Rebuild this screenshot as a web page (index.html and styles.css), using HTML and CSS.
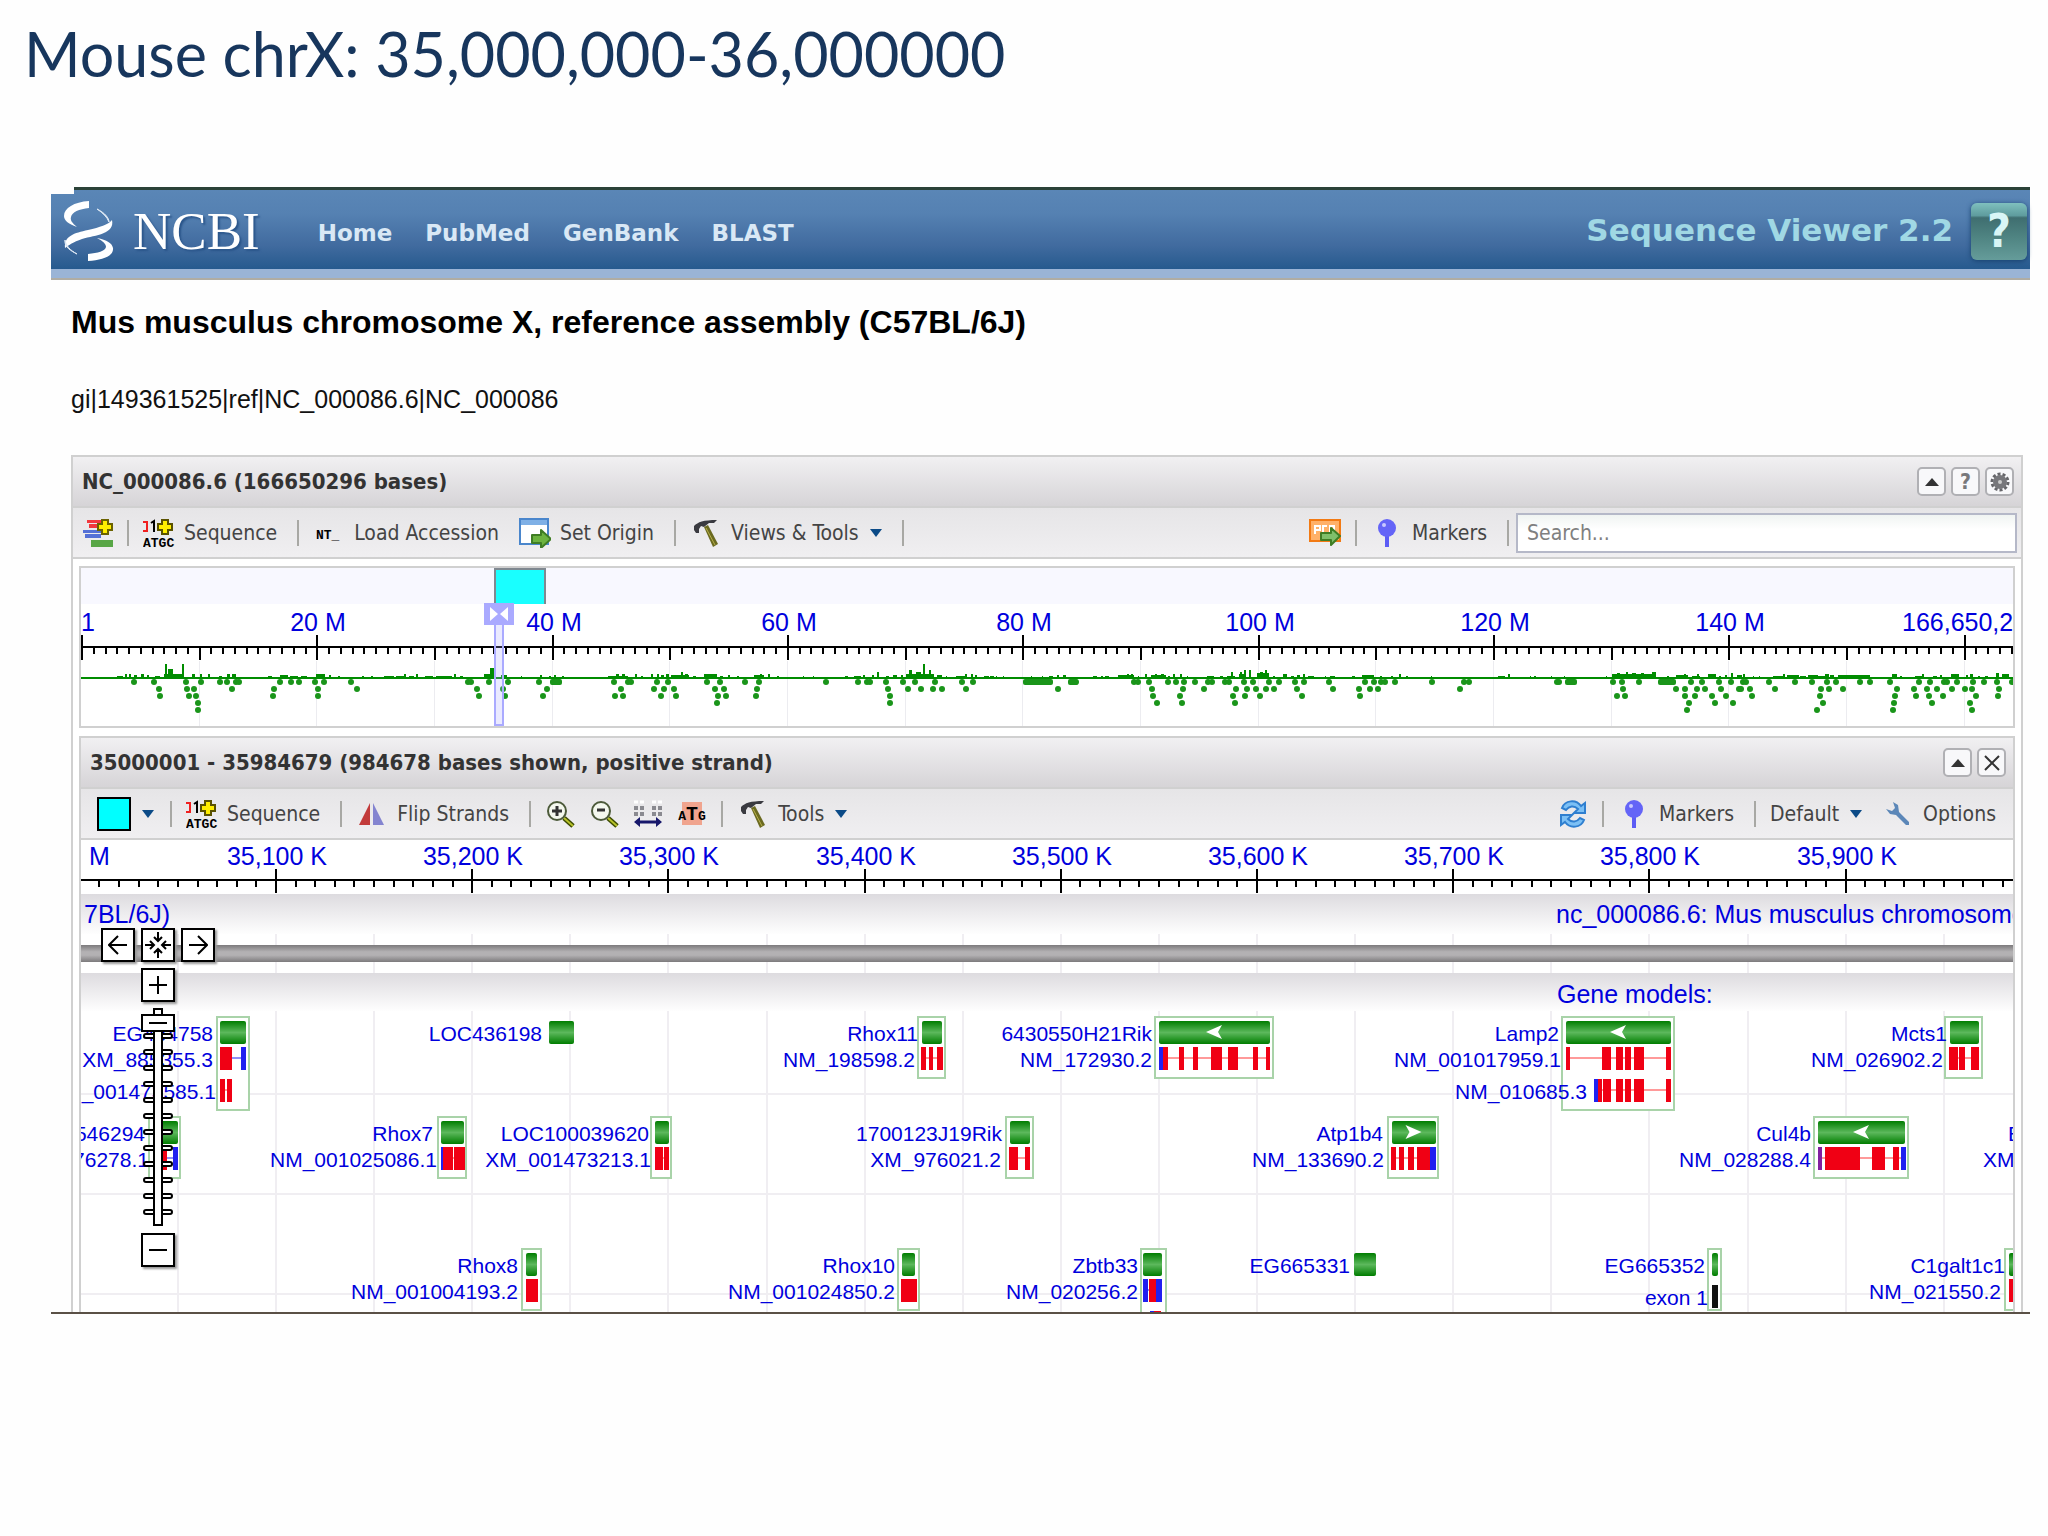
FILE: index.html
```html
<!DOCTYPE html>
<html lang="en">
<head>
  <meta charset="UTF-8">
  <title>Mouse chrX: 35,000,000-36,000000</title>
  <link rel="stylesheet" href="styles.css">
</head>
<body>

  <!-- icon definitions -->
  <svg class="defs" width="0" height="0" aria-hidden="true">
    <symbol id="i-caret" viewBox="0 0 12 8"><path d="M0 0h12L6 8z" fill="#0b4a87"/></symbol>
    <symbol id="i-tracks" viewBox="0 0 30 28">
      <path d="M4 1h14v3H4zM6 5h14v4H6z" fill="#f2383e"/>
      <path d="M0 11h19v3H0zM2 15h16v4H2z" fill="#5470d6"/>
      <path d="M8 21h22v7H8z" fill="#58a646"/>
      <path d="M19 1h6v4h4v6h-4v4h-6v-4h-4V5h4z" fill="#ffee00" stroke="#6b6200" stroke-width="2"/>
    </symbol>
    <symbol id="i-origin" viewBox="0 0 32 30">
      <rect x="1" y="1" width="28" height="25" fill="#fff" stroke="#4a86cc" stroke-width="2"/>
      <rect x="2" y="2" width="26" height="5" fill="#7fb0e6"/>
      <path d="M13 17h9v-5l10 9-10 9v-5h-9z" fill="#6cb33f" stroke="#3f7d24" stroke-width="2" stroke-linejoin="round"/>
    </symbol>
    <symbol id="i-hammer" viewBox="0 0 32 30">
      <path d="M4 8c4-4 9-6 23-6l-3 3h-5l-5 4-3-1-2 3v4H6l-2-3z" fill="#3a3a40"/>
      <path d="M14 9l4-2 10 19-5 3z" fill="#6b6a20"/>
      <path d="M16 10l9 17" stroke="#b8b04a" stroke-width="1"/>
    </symbol>
    <symbol id="i-export" viewBox="0 0 32 28">
      <rect x="1" y="1" width="30" height="21" fill="#ffb169" stroke="#f27a14" stroke-width="2"/>
      <path d="M6 15V7h5v4H7M14 15V7h4M21 15V7h4v4" fill="none" stroke="#fff" stroke-width="2"/>
      <path d="M12 14h10V9l9 8-9 9v-5H12z" fill="#7fbf6a" stroke="#3f7d24" stroke-width="2" stroke-linejoin="round"/>
    </symbol>
    <symbol id="i-pin" viewBox="0 0 32 30">
      <path d="M14 16h4v13h-4z" fill="#5c5cf5"/>
      <circle cx="16" cy="10" r="9" fill="#6464f7"/>
      <circle cx="13" cy="7" r="2" fill="#c8c8ff"/>
    </symbol>
    <symbol id="i-flip" viewBox="0 0 32 28">
      <path d="M14 3v22H3z" fill="#c23b3b"/>
      <path d="M17 3v22h11z" fill="#8484d0"/>
    </symbol>
    <symbol id="i-zoom-in" viewBox="0 0 30 28">
      <path d="M19 18l9 8" stroke="#3c4a00" stroke-width="5"/>
      <path d="M19 18l9 8" stroke="#b7c22a" stroke-width="2"/>
      <circle cx="12" cy="11" r="9" fill="#f4f8ee" stroke="#4c5a3a" stroke-width="2"/>
      <path d="M7 11h10M12 6v10" stroke="#333" stroke-width="3"/>
    </symbol>
    <symbol id="i-zoom-out" viewBox="0 0 30 28">
      <path d="M19 18l9 8" stroke="#3c4a00" stroke-width="5"/>
      <path d="M19 18l9 8" stroke="#b7c22a" stroke-width="2"/>
      <circle cx="12" cy="11" r="9" fill="#f4f8ee" stroke="#4c5a3a" stroke-width="2"/>
      <path d="M8 10h8" stroke="#333" stroke-width="3"/>
    </symbol>
    <symbol id="i-range" viewBox="0 0 30 28">
      <path d="M1 2h4M7 2h4M19 2h4M25 2h4" stroke="#fff" stroke-width="3"/>
      <path d="M1 8h4M7 8h4M19 8h4M25 8h4M1 14h4M7 14h4M19 14h4M25 14h4" stroke="#8a8a90" stroke-width="4"/>
      <path d="M4 22h22" stroke="#17176b" stroke-width="3"/>
      <path d="M7 17v10l-6-5zM23 17v10l6-5z" fill="#17176b"/>
    </symbol>
    <symbol id="i-refresh" viewBox="0 0 30 28">
      <path d="M4 8C7 0 18-1 23 6l4-3v10H16l4-4c-4-4-9-3-12 1z" fill="#7cc0f5" stroke="#2f7fd0" stroke-width="2"/>
      <path d="M26 20C23 28 12 29 7 22l-4 3V15h11l-4 4c4 4 9 3 12-1z" fill="#7cc0f5" stroke="#2f7fd0" stroke-width="2"/>
    </symbol>
    <symbol id="i-wrench" viewBox="0 0 32 28">
      <path d="M4 9l6 2 3-3-2-6 5 3 1 7 10 10v3h-3L14 15l-6-1z" fill="#5c87b8"/>
    </symbol>
    <symbol id="i-gear" viewBox="0 0 20 20">
      <circle cx="10" cy="10" r="8" fill="none" stroke="#66666a" stroke-width="3" stroke-dasharray="3 2"/>
      <circle cx="10" cy="10" r="7" fill="#77777b"/>
      <circle cx="10" cy="10" r="2" fill="#ccc"/>
    </symbol>
    <linearGradient id="gene-fill" x1="0" y1="0" x2="0" y2="1">
      <stop offset="0" stop-color="#007d00"/>
      <stop offset="0.5" stop-color="#5cb85c"/>
      <stop offset="1" stop-color="#007d00"/>
    </linearGradient>
    <linearGradient id="band-fill" x1="0" y1="0" x2="0" y2="1">
      <stop offset="0" stop-color="#dddbdf"/>
      <stop offset="1" stop-color="#fefefe"/>
    </linearGradient>
    <linearGradient id="seq-fill" x1="0" y1="0" x2="0" y2="1">
      <stop offset="0" stop-color="#7c7a7c"/>
      <stop offset="0.4" stop-color="#b3b1b3"/>
      <stop offset="0.6" stop-color="#b3b1b3"/>
      <stop offset="1" stop-color="#7c7a7c"/>
    </linearGradient>
  </svg>

  <h1 class="slide-title">Mouse chrX: 35,000,000-36,000000</h1>

  <div class="frame">
    <header class="banner">
      <a class="logo" href="#" aria-label="NCBI">
        <svg width="54" height="62" viewBox="0 0 54 62">
          <path d="M27 1C12 2 2 8 2 16c0 4 4 8 13 11-5-4-7-7-6-10 1-5 8-8 18-9z" fill="#fff"/>
          <path d="M35 9c8 4 12 9 12 13-2-5-6-9-12-13z" fill="#dfe9f5" stroke="#dfe9f5"/>
          <path d="M50 20c3 14-16 15-30 19-9 3-13 6-17 9C2 36 12 33 26 30c12-3 20-5 24-10z" fill="#fff"/>
          <path d="M3 40c1 6 5 10 12 14-6-3-13-7-12-14z" fill="#dfe9f5" stroke="#dfe9f5"/>
          <path d="M35 38c10 2 15 5 16 10 1 8-10 12-25 13v-7c10-1 17-3 18-7 0-3-3-6-9-9z" fill="#fff"/>
        </svg>
        <span>NCBI</span>
      </a>
      <nav class="nav">
        <a href="#">Home</a>
        <a href="#">PubMed</a>
        <a href="#">GenBank</a>
        <a href="#">BLAST</a>
      </nav>
      <span class="app-name">Sequence Viewer 2.2</span>
      <button class="help-btn">?</button>
    </header>

    <main class="content">
      <h2 class="seq-title">Mus musculus chromosome X, reference assembly (C57BL/6J)</h2>
      <p class="seq-id">gi|149361525|ref|NC_000086.6|NC_000086</p>

      <section class="panel">
        <div class="panel-header">
          <h3>NC_000086.6 (166650296 bases)</h3>
          <button class="tool" aria-label="Collapse"><svg width="14" height="8"><path d="M7 0l7 8H0z" fill="#333"/></svg></button>
          <button class="tool">?</button>
          <button class="tool" aria-label="Settings"><svg width="20" height="20"><use href="#i-gear"/></svg></button>
        </div>
        <div class="toolbar">
          <button class="tb-btn icon-only" aria-label="Tracks"><svg width="30" height="28"><use href="#i-tracks"/></svg></button>
          <i class="sep"></i>
          <button class="tb-btn">
            <svg width="32" height="28">
              <path d="M0 3h4v9H0" fill="none" stroke="#f02020" stroke-width="2"/>
              <path d="M8 4l3-2v11" fill="none" stroke="#000" stroke-width="2"/>
              <text x="0" y="28" class="icon-text">ATGC</text>
              <path d="M19 1h6v4h4v6h-4v4h-6v-4h-4V5h4z" fill="#ffee00" stroke="#5a5200" stroke-width="2"/>
            </svg>Sequence</button>
          <i class="sep"></i>
          <button class="tb-btn"><svg width="32" height="28"><text x="3" y="20" class="icon-text">NT_</text></svg>Load Accession</button>
          <button class="tb-btn"><svg width="32" height="30"><use href="#i-origin"/></svg>Set Origin</button>
          <i class="sep"></i>
          <button class="tb-btn"><svg width="32" height="30"><use href="#i-hammer"/></svg>Views &amp; Tools<svg class="caret" width="12" height="8"><use href="#i-caret"/></svg></button>
          <i class="sep"></i>
          <span class="fill"></span>
          <button class="tb-btn icon-only" aria-label="Export"><svg width="32" height="28"><use href="#i-export"/></svg></button>
          <i class="sep"></i>
          <button class="tb-btn"><svg width="32" height="30"><use href="#i-pin"/></svg>Markers</button>
          <i class="sep"></i>
          <input class="search" type="text" placeholder="Search..." aria-label="Search">
        </div>

        <div class="view overview">
          <svg id="overview" class="track" height="158"></svg>
        </div>

        <div class="view">
          <div class="panel-header">
            <h3>35000001 - 35984679 (984678 bases shown, positive strand)</h3>
            <button class="tool" aria-label="Collapse"><svg width="14" height="8"><path d="M7 0l7 8H0z" fill="#333"/></svg></button>
            <button class="tool" aria-label="Close"><svg width="18" height="18"><path d="M2 2l14 14M16 2L2 16" stroke="#333" stroke-width="2"/></svg></button>
          </div>
          <div class="toolbar inner">
            <button class="tb-btn color-btn" aria-label="Colour"><span class="swatch"></span><svg class="caret" width="12" height="8"><use href="#i-caret"/></svg></button>
            <i class="sep"></i>
            <button class="tb-btn">
              <svg width="32" height="28">
                <path d="M0 3h4v9H0" fill="none" stroke="#f02020" stroke-width="2"/>
                <path d="M8 4l3-2v11" fill="none" stroke="#000" stroke-width="2"/>
                <text x="0" y="28" class="icon-text">ATGC</text>
                <path d="M19 1h6v4h4v6h-4v4h-6v-4h-4V5h4z" fill="#ffee00" stroke="#5a5200" stroke-width="2"/>
              </svg>Sequence</button>
            <i class="sep"></i>
            <button class="tb-btn"><svg width="32" height="28"><use href="#i-flip"/></svg>Flip Strands</button>
            <i class="sep"></i>
            <button class="tb-btn icon-only" aria-label="Zoom in"><svg width="30" height="28"><use href="#i-zoom-in"/></svg></button>
            <button class="tb-btn icon-only" aria-label="Zoom out"><svg width="30" height="28"><use href="#i-zoom-out"/></svg></button>
            <button class="tb-btn icon-only" aria-label="Zoom to range"><svg width="30" height="28"><use href="#i-range"/></svg></button>
            <button class="tb-btn icon-only" aria-label="Zoom to sequence">
              <svg width="30" height="28">
                <rect x="5" y="2" width="20" height="23" fill="#f0a48e"/>
                <text x="15" y="20" text-anchor="middle" class="icon-text">A<tspan class="big">T</tspan>G</text>
              </svg>
            </button>
            <i class="sep"></i>
            <button class="tb-btn"><svg width="32" height="30"><use href="#i-hammer"/></svg>Tools<svg class="caret" width="12" height="8"><use href="#i-caret"/></svg></button>
            <span class="fill"></span>
            <button class="tb-btn icon-only" aria-label="Reload"><svg width="30" height="28"><use href="#i-refresh"/></svg></button>
            <i class="sep"></i>
            <button class="tb-btn"><svg width="32" height="30"><use href="#i-pin"/></svg>Markers</button>
            <i class="sep"></i>
            <button class="tb-btn">Default<svg class="caret" width="12" height="8"><use href="#i-caret"/></svg></button>
            <button class="tb-btn"><svg width="32" height="28"><use href="#i-wrench"/></svg>Options</button>
          </div>
          <div class="detail">
            <svg id="detail" class="track" height="472"></svg>
            <!-- pan / zoom control floating over the tracks -->
            <div class="navigator">
              <div class="pan">
                <button aria-label="Left"><svg width="20" height="20"><path d="M19 10H1M10 1l-9 9 9 9"/></svg></button>
                <button aria-label="Centre"><svg width="28" height="28"><path d="M14 1v9M10 6l4 4 4-4M14 27v-9M10 22l4-4 4 4M1 14h9M6 10l4 4-4 4M27 14h-9M22 10l-4 4 4 4"/></svg></button>
                <button aria-label="Right"><svg width="20" height="20"><path d="M1 10h18M10 1l9 9-9 9"/></svg></button>
              </div>
              <button aria-label="Zoom in"><svg width="20" height="20"><path d="M1 10h18M10 1v18"/></svg></button>
              <div class="zoom">
                <svg id="zoom-scale" width="34" height="219"></svg>
                <input type="range" min="0" max="12" value="12" aria-label="Zoom level">
              </div>
              <button aria-label="Zoom out"><svg width="20" height="20"><path d="M1 10h18"/></svg></button>
            </div>
          </div>
        </div>
      </section>
    </main>
  </div>

  <script src="script.js"></script>
</body>
</html>
```
FILE: styles.css
```css
body {
  margin: 0;
  background: #fefefe;
  font-family: "DejaVu Sans Condensed", "DejaVu Sans", sans-serif;
}

.defs {
  position: absolute;
}

button {
  font: inherit;
  color: inherit;
  background: none;
  border: none;
  padding: 0;
  cursor: pointer;
}

svg {
  display: block;
  flex: none;
}

.icon-text {
  font: bold 13px "Liberation Mono", monospace;
  fill: #000;
}

.icon-text .big {
  font-size: 20px;
}

.slide-title {
  margin: 0;
  padding: 12px 24px 91px;
  font: 61px/84px Lato, sans-serif;
  color: #17365d;
}

.frame {
  margin: 0 18px 40px 51px;
  border-bottom: 2px solid #5a5046;
}

/* banner */
.banner {
  position: relative;
  display: flex;
  align-items: center;
  height: 79px;
  padding: 0 3px 0 11px;
  border-top: 3px solid #2b4238;
  border-bottom: 9px solid #9ab4d6;
  background: linear-gradient(#5a86b6, #5581b2 30%, #416b9f 70%, #265a8e) padding-box;
  box-shadow: 0 2px 0 #b0ada4;
}

.banner::before {
  content: "";
  position: absolute;
  left: 0;
  top: -3px;
  width: 23px;
  height: 7px;
  background: #fefefe;
}

.logo {
  display: flex;
  align-items: center;
  gap: 17px;
  margin-top: 2px;
  color: #fff;
  font: 53px/60px "Liberation Serif", serif;
  text-decoration: none;
  text-shadow: 2px 2px 2px #2a558a;
}

.nav {
  display: flex;
  gap: 33px;
  flex: 1;
  margin-left: 58px;
  padding-top: 6px;
}

.nav a {
  color: #d9e8f5;
  font: bold 23px/30px "DejaVu Sans", sans-serif;
  text-decoration: none;
}

.app-name {
  margin-right: 18px;
  color: #a0d8e4;
  font: bold 31px/40px "DejaVu Sans", sans-serif;
}

.help-btn {
  width: 56px;
  height: 57px;
  margin-top: 4px;
  border-radius: 6px;
  background: linear-gradient(#7fc0be, #5f9c9e 22%, #3f6e70 26%, #4f8482 60%, #659c9a);
  box-shadow: 0 1px 5px #16406e;
  color: #d8f6f6;
  font: bold 46px/57px "DejaVu Sans Condensed", sans-serif;
}

/* sequence info */
.content {
  padding: 24px 7px 0 20px;
}

.seq-title {
  margin: 0 0 42px;
  font: bold 32px/40px "Liberation Sans", Arial, sans-serif;
  color: #000;
}

.seq-id {
  margin: 0 0 41px;
  font: 25px/30px "Liberation Sans", Arial, sans-serif;
  color: #111;
}

/* panels */
.panel {
  border: 2px solid #d0d0d0;
  border-bottom: none;
  background: #fff;
}

.panel-header {
  display: flex;
  align-items: center;
  gap: 5px;
  height: 49px;
  padding: 0 7px 0 9px;
  border-bottom: 2px solid #d0d0d0;
  background: linear-gradient(#f1f0f2, #d6d4d7);
}

.panel-header h3 {
  flex: 1;
  margin: 0;
  font-size: 22px;
  line-height: 28px;
  color: #333;
}

.tool {
  display: flex;
  align-items: center;
  justify-content: center;
  width: 29px;
  height: 29px;
  border: 2px solid #b0b0b4;
  border-radius: 5px;
  background: #f8f8fa;
  font-size: 21px;
  font-weight: bold;
  color: #77777b;
}

.toolbar {
  display: flex;
  align-items: center;
  gap: 14px;
  height: 49px;
  padding: 0 4px 0 10px;
  border-bottom: 2px solid #d0d0d0;
  background: linear-gradient(#e6e5e7, #f0eff1);
}

.toolbar.inner {
  padding: 0 11px 0 16px;
}

.tb-btn {
  display: flex;
  align-items: center;
  gap: 9px;
  padding-right: 6px;
  font-size: 21px;
  line-height: 28px;
  color: #444;
  white-space: nowrap;
}

.tb-btn.icon-only {
  padding-right: 0;
}

.tb-btn.color-btn {
  padding-right: 2px;
}

.sep {
  width: 2px;
  height: 26px;
  background: #a8a8a4;
}

.caret {
  margin-left: 2px;
}

.fill {
  flex: 1;
}

.swatch {
  width: 30px;
  height: 30px;
  border: 2px solid #000;
  background: #0ff;
}

.search {
  box-sizing: border-box;
  width: 501px;
  height: 40px;
  margin-left: -7px;
  padding: 0 9px;
  border: 2px solid #b5b8c8;
  background: linear-gradient(#f0f4f2, #fff 40%);
  font: inherit;
  font-size: 21px;
}

.search::placeholder {
  color: #808080;
}

.view {
  margin: 0 6px;
  border: 2px solid #d0d0d0;
  border-bottom: none;
  background: #fff;
}

.view.overview {
  margin: 7px 6px 8px;
  border-bottom: 2px solid #d0d0d0;
}

/* tracks */
.track {
  width: 100%;
  overflow: hidden;
}

.track text {
  font-family: "Liberation Sans", Arial, sans-serif;
  font-size: 21px;
  fill: #00d;
}

.track text.scale {
  font-size: 25px;
}

.detail {
  position: relative;
}

.navigator {
  position: absolute;
  left: 20px;
  top: 88px;
  display: flex;
  flex-direction: column;
  align-items: center;
  gap: 6px;
}

.pan {
  display: flex;
  gap: 6px;
}

.navigator button {
  display: flex;
  align-items: center;
  justify-content: center;
  width: 34px;
  height: 34px;
  border: 2px solid #000;
  background: #fff;
  box-shadow: 2px 2px 2px #999;
}

.navigator button path {
  fill: none;
  stroke: #000;
  stroke-width: 2;
}

.zoom {
  position: relative;
  width: 34px;
  height: 219px;
}

.zoom input {
  position: absolute;
  left: 0;
  top: 6px;
  width: 34px;
  height: 212px;
  margin: 0;
  appearance: none;
  background: none;
  writing-mode: vertical-lr;
  direction: rtl;
}

.zoom input::-webkit-slider-thumb {
  appearance: none;
  box-sizing: border-box;
  width: 34px;
  height: 18px;
  border: 2px solid #000;
  background: linear-gradient(#000, #000) center / 18px 2px no-repeat #fff;
}
```
FILE: script.js
```js
var LEFT = 81;      // left edge of the tracks
var NS = 'http://www.w3.org/2000/svg';

function add(parent, tag, attrs, text) {
  var el = document.createElementNS(NS, tag);
  for (var k in attrs) el.setAttribute(k, attrs[k]);
  if (text) el.textContent = text;
  parent.appendChild(el);
  return el;
}

function rect(parent, x, y, w, h, fill) {
  return add(parent, 'rect', { x: x, y: y, width: w, height: h, fill: fill });
}

/* ---------- overview ---------- */

// density bars: x, width, height
var density = [
  [117,6,2],[125,2,4],[129,2,4],[134,3,3],[141,3,4],[147,2,3],[155,5,2],[164,20,4],[165,2,14],[168,5,9],[182,2,14],[192,3,4],
  [200,2,4],[208,2,4],[219,3,2],[227,3,4],[232,4,4],[268,4,2],[280,8,3],[290,8,2],[301,6,2],[316,9,4],[329,2,3],[338,2,2],
  [362,2,2],[371,2,2],[384,10,2],[396,8,2],[404,2,4],[409,5,2],[416,2,4],[425,8,2],[436,16,2],[454,2,4],[460,3,2],[484,12,4],
  [490,4,10],[501,6,3],[521,1,2],[540,2,3],[549,2,2],[554,2,3],[562,2,2],[608,20,2],[616,3,4],[622,3,4],[635,2,4],[641,2,2],
  [651,2,4],[657,2,4],[661,3,3],[666,3,4],[671,18,3],[681,2,6],[685,3,4],[693,3,2],[704,13,4],[720,3,2],[728,2,3],[737,2,2],
  [754,10,3],[760,2,4],[768,2,4],[777,2,2],[803,1,2],[813,1,2],[845,3,2],[854,7,2],[863,2,3],[872,2,3],[877,2,6],[886,3,2],
  [893,4,3],[901,2,3],[906,28,4],[909,3,8],[916,5,6],[923,2,14],[929,2,8],[937,5,3],[946,1,2],[956,9,2],[965,2,4],[971,2,4],
  [975,2,3],[984,5,2],[990,4,2],[996,1,2],[1003,1,2],[1031,1,2],[1042,1,2],[1049,4,2],[1057,2,3],[1063,3,3],[1093,4,2],
  [1101,2,2],[1105,4,2],[1118,16,3],[1127,2,4],[1131,2,4],[1138,1,2],[1145,2,4],[1151,15,3],[1155,2,4],[1161,3,4],[1168,2,2],
  [1173,2,4],[1180,2,4],[1187,1,2],[1207,7,2],[1220,3,2],[1227,8,2],[1231,2,6],[1239,6,4],[1240,2,6],[1244,2,8],[1249,2,8],
  [1257,12,5],[1260,3,6],[1265,2,8],[1273,2,2],[1283,4,4],[1291,3,2],[1297,3,3],[1303,2,4],[1308,6,2],[1325,1,2],[1330,5,2],
  [1352,3,2],[1362,12,3],[1380,2,2],[1391,2,2],[1399,2,4],[1406,2,2],[1431,1,2],[1498,7,2],[1508,2,4],[1530,1,2],[1534,2,2],
  [1551,1,2],[1564,1,2],[1606,1,2],[1612,44,4],[1617,3,5],[1626,2,6],[1632,4,5],[1641,3,5],[1652,4,6],[1667,2,2],[1676,12,3],
  [1684,2,4],[1692,8,2],[1697,2,4],[1708,8,4],[1719,2,2],[1725,2,3],[1731,2,5],[1737,5,3],[1743,2,4],[1753,1,2],[1759,1,2],
  [1773,10,2],[1783,2,4],[1787,12,3],[1800,6,2],[1808,10,3],[1818,10,2],[1825,4,4],[1830,4,3],[1838,22,3],[1860,10,3],
  [1892,5,4],[1900,2,2],[1915,8,2],[1922,2,4],[1933,4,2],[1940,2,3],[1951,8,4],[1966,2,3],[1970,3,4],[1978,2,2],[1985,3,2],
  [1996,3,5],[2002,7,4]
];

// gene dots, one list for each row below the line
var dots = [
  [134,154,186,201,220,227,236,239,280,291,299,315,324,351,468,471,489,508,539,614,628,631,657,668,707,720,745,759,826,858,
   867,870,886,903,915,935,962,973,1072,1076,1134,1138,1149,1168,1176,1184,1195,1208,1212,1225,1229,1244,1253,1269,1279,1295,
   1304,1329,1365,1374,1381,1385,1395,1432,1464,1469,1557,1559,1613,1622,1639,1691,1702,1719,1731,1743,1746,1769,1795,1812,
   1827,1836,1860,1870,1890,1919,1930,1944,1947,1957,1973,1984,1997,2012],
  [159,187,194,232,274,318,357,477,503,547,621,654,664,674,715,724,757,888,908,921,933,942,966,1058,1152,1183,1204,1236,
   1247,1256,1266,1274,1297,1333,1359,1370,1378,1460,1623,1676,1685,1697,1705,1721,1739,1741,1750,1775,1821,1829,1843,1897,
   1914,1927,1937,1952,1965,1972,1999],
  [160,189,196,273,318,479,505,543,615,623,661,676,718,726,756,890,1153,1180,1233,1245,1260,1302,1360,1617,1625,1685,1695,
   1712,1726,1752,1820,1895,1916,1929,1943,1976,1998],
  [198,717,890,1157,1182,1235,1689,1715,1733,1823,1894,1932,1970],
  [198,1687,1817,1893,1972]
];

// runs of dots that have merged into a bar: x, width
var runs = [[550,12],[1023,30],[1068,10],[1565,12],[1658,18]];

function drawOverview() {
  var svg = document.getElementById('overview');
  var i, x;
  rect(svg, 0, 0, '100%', 36, '#f8f8ff');

  for (i = 1; i <= 16; i++) {
    rect(svg, Math.round(i * 117.66), 93, 1, 65, '#ececf0');
  }
  rect(svg, 0, 78, '100%', 2, '#000');
  for (i = 0; i <= 166; i++) {
    x = Math.round(i * 11.766);
    if (i % 20 == 0) {
      rect(svg, x, 67, 2, 25, '#000');
    } else {
      rect(svg, x, 79, 2, i % 10 == 0 ? 13 : 7, '#000');
    }
  }
  add(svg, 'text', { x: 0, y: 63, 'class': 'scale' }, '1');
  for (i = 20; i <= 140; i += 20) {
    add(svg, 'text', { x: Math.round(2 + i * 11.766), y: 63, 'text-anchor': 'middle', 'class': 'scale' }, i + ' M');
  }
  add(svg, 'text', { x: 1821, y: 63, 'class': 'scale' }, '166,650,296');

  rect(svg, 0, 109, '100%', 2, '#008c00');
  density.forEach(function (d) {
    rect(svg, d[0] - LEFT, 110 - d[2], d[1], d[2], '#008c00');
  });
  dots.forEach(function (row, r) {
    row.forEach(function (x) {
      add(svg, 'circle', { cx: x - LEFT, cy: 114 + r * 7, r: 3, fill: '#1a951a' });
    });
  });
  runs.forEach(function (r) {
    add(svg, 'rect', { x: r[0] - LEFT, y: 111, width: r[1], height: 6, rx: 2, fill: '#1a951a' });
  });

  // selected range
  add(svg, 'path', { d: 'M414 36V1h50v35', fill: '#19ffff', stroke: '#808890', 'stroke-width': 2 });
  add(svg, 'rect', { x: 414, y: 37, width: 8, height: 120, fill: '#aaaaff', 'fill-opacity': 0.25, stroke: '#aaaaff', 'stroke-width': 2 });
  rect(svg, 403, 35, 30, 22, '#aaaaff');
  add(svg, 'path', { d: 'M409 39l8 7-8 7zM427 39l-8 7 8 7z', fill: '#fff' });
}

/* ---------- detail view ---------- */

var R = '#f00014', B = '#2020f0', K = '#111';

// x values are page based, rows are 'top' of the gene box
var genes = [
  { top: 1016, name: 'EG434758', end: 213, box: [216, 34, 95], gene: [220, 25], rna: [
    { name: 'XM_885355.3', end: 213, ex: [[220,11,R],[241,4,B]], line: [231, 10, B] },
    { name: 'XM_001473585.1', end: 216, ex: [[220,4,R],[227,4,R]], line: [220, 11, R] } ] },
  { top: 1016, name: 'LOC436198', end: 542, gene: [549, 24], rna: [] },
  { top: 1016, name: 'Rhox11', end: 918, box: [917, 29, 63], gene: [922, 19], rna: [
    { name: 'NM_198598.2', end: 915, ex: [[921,4,R],[929,3,R],[937,5,R]], line: [921, 20, R] } ] },
  { top: 1016, name: '6430550H21Rik', end: 1152, box: [1154, 120, 63], gene: [1159, 110], arrow: -1, rna: [
    { name: 'NM_172930.2', end: 1152, ex: [[1159,4,B],[1163,4,R],[1179,4,R],[1193,4,R],[1211,10,R],[1228,3,R],[1232,5,R],[1253,4,R],[1266,3,R]], line: [1160, 108, R] } ] },
  { top: 1016, name: 'Lamp2', end: 1559, box: [1561, 114, 95], gene: [1566, 104], arrow: -1, rna: [
    { name: 'NM_001017959.1', end: 1561, ex: [[1566,3,R],[1602,8,R],[1616,6,R],[1625,5,R],[1634,9,R],[1666,4,R]], line: [1566, 104, R] },
    { name: 'NM_010685.3', end: 1587, ex: [[1594,4,B],[1598,3,R],[1603,7,R],[1616,6,R],[1625,5,R],[1634,9,R],[1666,4,R]], line: [1596, 74, R] } ] },
  { top: 1016, name: 'Mcts1', end: 1947, box: [1944, 39, 63], gene: [1950, 28], rna: [
    { name: 'NM_026902.2', end: 1943, ex: [[1949,8,R],[1959,5,R],[1971,7,R]], line: [1950, 28, R] } ] },

  { top: 1116, name: 'EG546294', end: 145, box: [148, 33, 63], gene: [153, 24], rna: [
    { name: 'XM_976278.1', end: 149, ex: [[153,4,B],[160,6,R],[173,4,B]], line: [153, 22, B] } ] },
  { top: 1116, name: 'Rhox7', end: 433, box: [437, 30, 63], gene: [441, 22], rna: [
    { name: 'NM_001025086.1', end: 437, ex: [[441,2,B],[443,9,R],[454,10,R]], line: [443, 20, R] } ] },
  { top: 1116, name: 'LOC100039620', end: 649, box: [650, 22, 63], gene: [655, 13], rna: [
    { name: 'XM_001473213.1', end: 651, ex: [[655,7,R],[664,4,R]], line: [655, 12, R] } ] },
  { top: 1116, name: '1700123J19Rik', end: 1002, box: [1005, 29, 63], gene: [1010, 19], rna: [
    { name: 'XM_976021.2', end: 1001, ex: [[1009,8,R],[1025,4,R]], line: [1010, 19, R] } ] },
  { top: 1116, name: 'Atp1b4', end: 1383, box: [1387, 52, 63], gene: [1392, 43], arrow: 1, rna: [
    { name: 'NM_133690.2', end: 1384, ex: [[1391,4,R],[1399,4,R],[1408,5,R],[1417,13,R],[1430,5,B]], line: [1392, 40, R] } ] },
  { top: 1116, name: 'Cul4b', end: 1811, box: [1813, 96, 63], gene: [1818, 86], arrow: -1, rna: [
    { name: 'NM_028288.4', end: 1811, ex: [[1818,3,'#8020a0'],[1825,34,R],[1872,12,R],[1893,5,R],[1901,4,B]], line: [1820, 82, R] } ] },
  { top: 1116, name: 'EG546296', start: 2008, rna: [{ name: 'XM_976290.1', start: 1983, ex: [] }] },

  { top: 1248, name: 'Rhox8', end: 518, box: [521, 21, 63], gene: [526, 10], rna: [
    { name: 'NM_001004193.2', end: 518, ex: [[526,11,R]] } ] },
  { top: 1248, name: 'Rhox10', end: 895, box: [897, 23, 63], gene: [902, 12], rna: [
    { name: 'NM_001024850.2', end: 895, ex: [[901,4,R],[906,5,R],[912,4,R]], line: [901, 15, R] } ] },
  { top: 1248, name: 'Zbtb33', end: 1138, box: [1140, 27, 95], gene: [1143, 18], rna: [
    { name: 'NM_020256.2', end: 1138, ex: [[1143,4,B],[1149,7,R],[1156,5,B]], line: [1143, 18, B] },
    { ex: [[1150,4,B],[1154,6,R]] } ] },
  { top: 1248, name: 'EG665331', end: 1350, gene: [1354, 21], rna: [] },
  { top: 1248, name: 'EG665352', end: 1705, box: [1707, 15, 63], gene: [1712, 5], rna: [
    { name: 'exon 1', end: 1708, drop: 6, ex: [[1712,5,K]] } ] },
  { top: 1248, name: 'C1galt1c1', end: 2005, box: [2004, 40, 63], gene: [2009, 30], rna: [
    { name: 'NM_021550.2', end: 2001, ex: [[2009,30,R]] } ] }
];

function label(svg, item, y) {
  if (!item.name) return;
  var atEnd = item.end !== undefined;
  add(svg, 'text', { x: (atEnd ? item.end : item.start) - LEFT, y: y, 'text-anchor': atEnd ? 'end' : 'start' }, item.name);
}

function drawGene(svg, g) {
  var y = g.top - 840;
  if (g.box) {
    add(svg, 'rect', { x: g.box[0] - LEFT + 1, y: y + 1, width: g.box[1] - 2, height: g.box[2] - 2, fill: '#fff', stroke: '#a9d3a9', 'stroke-width': 2 });
  }
  label(svg, g, y + 25);
  if (g.gene) {
    add(svg, 'rect', { x: g.gene[0] - LEFT, y: y + 5, width: g.gene[1] + 1, height: 23, rx: 2, fill: 'url(#gene-fill)' });
  }
  if (g.arrow) {
    var cx = g.gene[0] - LEFT + g.gene[1] / 2;
    var a = g.arrow * 8;
    add(svg, 'path', { d: 'M' + (cx + a) + ' ' + (y + 16) + 'l' + (-2 * a) + ' -7l' + (a / 2) + ' 7l' + (-a / 2) + ' 7z', fill: '#fff' });
  }
  g.rna.forEach(function (m, i) {
    var top = y + 31 + i * 32 + (m.drop || 0);
    label(svg, m, top + 20);
    if (m.line) rect(svg, m.line[0] - LEFT, top + 10, m.line[1], 2, m.line[2] == B ? '#9090f8' : '#ff9a9a');
    m.ex.forEach(function (e) {
      rect(svg, e[0] - LEFT, top, e[1] + 1, 23, e[2]);
    });
  });
}

function drawDetail() {
  var svg = document.getElementById('detail');
  var i, x;

  // grid
  for (i = -1; i < 20; i++) {
    rect(svg, Math.round(194 + i * 98.1), 90, 2, 382, '#f0eef2');
  }
  [253, 353, 453].forEach(function (y) {
    rect(svg, 0, y, '100%', 2, '#f0eef2');
  });

  // ruler
  rect(svg, 0, 39, '100%', 2, '#000');
  for (i = -9; i < 100; i++) {
    x = Math.round(194 + i * 19.62);
    if (i % 10 == 0) {
      rect(svg, x, 29, 2, 24, '#000');
    } else {
      rect(svg, x, 40, 2, 7, '#000');
    }
  }
  add(svg, 'text', { x: 8, y: 25, 'class': 'scale' }, 'M');
  for (i = 0; i < 9; i++) {
    add(svg, 'text', { x: Math.round(196 + i * 196.2), y: 25, 'text-anchor': 'middle', 'class': 'scale' }, '35,' + (i + 1) + '00 K');
  }

  // sequence bar
  rect(svg, 0, 54, '100%', 40, 'url(#band-fill)');
  rect(svg, 0, 105, '100%', 17, 'url(#seq-fill)');
  add(svg, 'text', { x: 3, y: 83, 'class': 'scale' }, '7BL/6J)');
  add(svg, 'text', { x: 1475, y: 83, 'class': 'scale' }, 'nc_000086.6: Mus musculus chromosome X');

  // gene models
  rect(svg, 0, 133, '100%', 38, 'url(#band-fill)');
  add(svg, 'text', { x: 1476, y: 163, 'class': 'scale' }, 'Gene models:');
  genes.forEach(function (g) { drawGene(svg, g); });
}

function drawZoomScale() {
  var svg = document.getElementById('zoom-scale');
  var i;
  add(svg, 'rect', { x: 13, y: 1, width: 8, height: 8, fill: '#fff', stroke: '#000', 'stroke-width': 2 });
  for (i = 0; i < 12; i++) {
    add(svg, 'rect', { x: 3, y: 26 + i * 16, width: 28, height: 4, rx: 2, fill: '#fff', stroke: '#000', 'stroke-width': 2 });
  }
  add(svg, 'rect', { x: 13, y: 20, width: 8, height: 197, fill: '#fff', stroke: '#000', 'stroke-width': 2 });
}

drawOverview();
drawDetail();
drawZoomScale();
```
